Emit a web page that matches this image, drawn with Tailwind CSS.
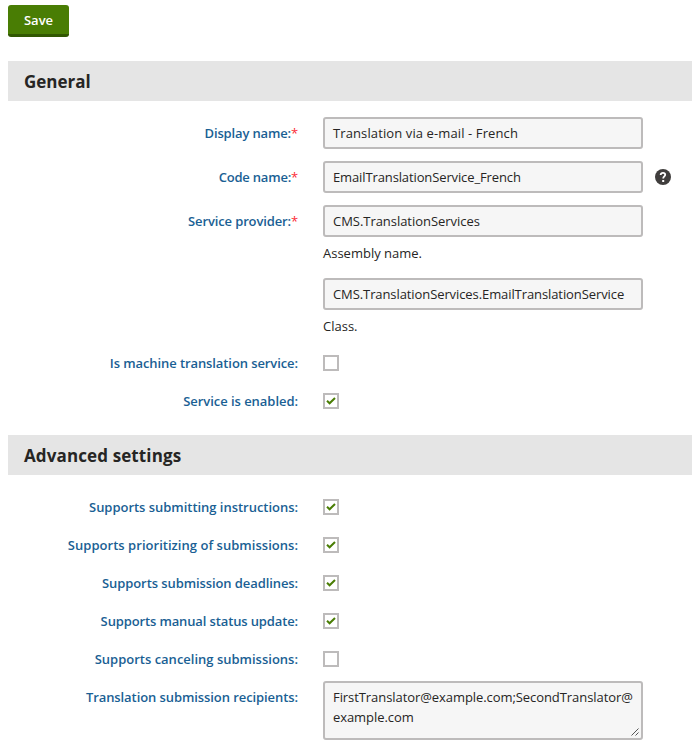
<!DOCTYPE html>
<html lang="en">
<head>
<meta charset="utf-8">
<title>Translation service</title>
<script src="https://cdn.jsdelivr.net/npm/@tailwindcss/browser@4"></script>
</head>
<body class="w-[692px] h-[746px] overflow-hidden bg-white pl-2 pt-[5px] font-['Open_Sans','Noto_Sans',sans-serif] text-[13px] leading-5 text-[#262524]">
<svg class="hidden"><symbol id="check" viewBox="0 0 12 12"><path d="M2 5.8 4.6 8.3 10 3" fill="none" stroke="#497d04" stroke-width="2"/></symbol></svg>
<button class="block w-[61px] h-8 rounded-[3px] bg-[#497d04] border-b-3 border-[#315702] text-white font-semibold leading-[31px]">Save</button>

<h2 class="mt-6 h-10 bg-[#e5e5e5] pl-4 text-[17px] leading-[42px] font-bold">General</h2>
<div class="grid grid-cols-[290px_320px_1fr] gap-x-[25px] pt-4">
  <label class="pt-1.5 text-right font-semibold text-[#1a5f94] tracking-[-0.15px]">Display name:<span class="text-red-500 font-normal">*</span></label>
  <div class="h-8 mb-3 border-2 border-[#bdbbbb] rounded-[3px] bg-[#f6f6f6] px-2 leading-7 tracking-[0.11px]">Translation via e-mail - French</div><i></i>
  <label class="pt-1.5 text-right font-semibold text-[#1a5f94] tracking-[-0.2px]">Code name:<span class="text-red-500 font-normal">*</span></label>
  <div class="h-8 mb-3 border-2 border-[#bdbbbb] rounded-[3px] bg-[#f6f6f6] px-2 leading-7 tracking-[-0.12px]">EmailTranslationService_French</div>
  <svg class="w-4 h-4 mt-2 -ml-[13px]" viewBox="0 0 16 16"><circle cx="8" cy="8" r="8" fill="#403e3d"/><path d="M5.7 6V5.6Q5.9 3.8 8 3.8T10.2 5.7Q10.2 6.7 9.2 7.4T8.2 9.4" fill="none" stroke="#fff" stroke-width="1.8"/><path d="M7.2 11h2v2h-2z" fill="#fff"/></svg>
  <label class="pt-1.5 text-right font-semibold text-[#1a5f94] tracking-[-0.13px]">Service provider:<span class="text-red-500 font-normal">*</span></label>
  <div>
    <div class="h-8 border-2 border-[#bdbbbb] rounded-[3px] bg-[#f6f6f6] px-2 leading-7 tracking-[-0.04px]">CMS.TranslationServices</div>
    <p class="mt-1.5 mb-[15px]">Assembly name.</p>
    <div class="h-8 border-2 border-[#bdbbbb] rounded-[3px] bg-[#f6f6f6] px-2 leading-7 tracking-[-0.09px]">CMS.TranslationServices.EmailTranslationService</div>
    <p class="mt-1.5 mb-[17px]">Class.</p>
  </div><i></i>
  <label class="h-[38px] text-right font-semibold text-[#1a5f94] tracking-[-0.09px]">Is machine translation service:</label>
  <div class="w-4 h-4 mt-[2px] border-2 border-[#bdbbbb]"></div><i></i>
  <label class="h-[38px] text-right font-semibold text-[#1a5f94] tracking-[-0.04px]">Service is enabled:</label>
  <div class="w-4 h-4 mt-[2px] border-2 border-[#bdbbbb]"><svg class="w-3 h-3"><use href="#check"/></svg></div>
</div>

<h2 class="mt-[6px] h-10 bg-[#e5e5e5] pl-4 text-[17px] leading-[42px] font-bold tracking-[0.12px]">Advanced settings</h2>
<div class="grid grid-cols-[290px_320px] gap-x-[25px] pt-[22px]">
  <label class="h-[38px] text-right font-semibold text-[#1a5f94] tracking-[-0.03px]">Supports submitting instructions:</label>
  <div class="w-4 h-4 mt-[2px] border-2 border-[#bdbbbb]"><svg class="w-3 h-3"><use href="#check"/></svg></div>
  <label class="h-[38px] text-right font-semibold text-[#1a5f94] tracking-[0.03px]">Supports prioritizing of submissions:</label>
  <div class="w-4 h-4 mt-[2px] border-2 border-[#bdbbbb]"><svg class="w-3 h-3"><use href="#check"/></svg></div>
  <label class="h-[38px] text-right font-semibold text-[#1a5f94] tracking-[-0.09px]">Supports submission deadlines:</label>
  <div class="w-4 h-4 mt-[2px] border-2 border-[#bdbbbb]"><svg class="w-3 h-3"><use href="#check"/></svg></div>
  <label class="h-[38px] text-right font-semibold text-[#1a5f94] tracking-[-0.13px]">Supports manual status update:</label>
  <div class="w-4 h-4 mt-[2px] border-2 border-[#bdbbbb]"><svg class="w-3 h-3"><use href="#check"/></svg></div>
  <label class="h-8 text-right font-semibold text-[#1a5f94]">Supports canceling submissions:</label>
  <div class="w-4 h-4 mt-[2px] border-2 border-[#bdbbbb]"></div>
  <label class="pt-1.5 text-right font-semibold text-[#1a5f94] tracking-[-0.08px]">Translation submission recipients:</label>
  <div class="relative h-[59px] border-2 border-[#bdbbbb] rounded-[3px] bg-[#f6f6f6] px-2 pt-1 leading-5 whitespace-nowrap tracking-[-0.07px]">FirstTranslator@example.com;SecondTranslator@<br>example.com
    <svg class="absolute right-0.5 bottom-0.5 w-2 h-2" viewBox="0 0 8 8"><path d="M.5 7.5l7-7M4.5 7.5l3-3" stroke="#555" stroke-width="1"/></svg>
  </div>
</div>
</body>
</html>
